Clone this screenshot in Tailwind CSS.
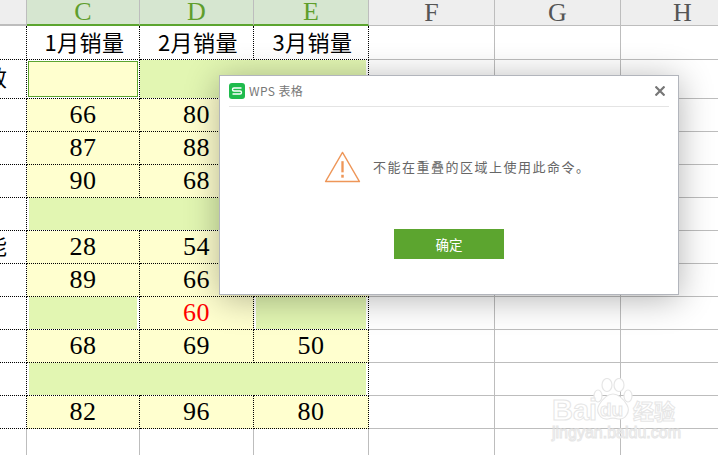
<!DOCTYPE html>
<html>

<head>
    <meta charset="UTF-8">
    <script src="https://cdn.jsdelivr.net/npm/@tailwindcss/browser@4"></script>
</head>

<body class="w-[718px] h-[455px] overflow-hidden bg-white relative font-['Liberation_Serif','Noto_Sans_CJK_SC',serif]">
    <div id="sheet" class="w-[745px] grid grid-cols-[27px_113px_114px_115px_126px_126px_124px] grid-rows-[26px_34px_39px_repeat(10,33px)_27px]"></div>

    <!-- watermark -->
    <div class="absolute left-[550px] top-[378px] w-[130px] h-[64px] text-white [-webkit-text-stroke:1px_#e6e6e6]">
        <svg class="absolute left-[43px] top-0" width="40" height="43" viewBox="0 0 40 43" fill="#fff" stroke="#e6e6e6" stroke-width="1.2">
            <ellipse cx="5" cy="18" rx="4" ry="6" />
            <ellipse cx="14" cy="7" rx="5" ry="6.5" />
            <ellipse cx="26" cy="7" rx="5" ry="6.5" />
            <ellipse cx="35" cy="18" rx="4" ry="6" />
            <path d="M20 16c6 0 11 6 14 11 4 7-2 15-9 14-3-1-7-1-10 0-7 1-13-7-9-14 3-5 8-11 14-11z" />
        </svg>
        <span class="absolute left-[2px] top-[20px] font-['Liberation_Sans'] font-bold text-[29px] leading-[24px]">Bai</span>
        <span class="absolute left-[50px] top-[22px] font-['Liberation_Sans'] font-bold text-[19px] leading-[20px]">du</span>
        <span class="absolute left-[83px] top-[20px] font-['Noto_Sans_CJK_SC'] font-bold text-[21px] leading-[24px] whitespace-nowrap">经验</span>
        <span class="absolute left-[2px] top-[46px] font-['Liberation_Sans'] text-[16px] leading-[18px] whitespace-nowrap">jingyan.baidu.com</span>
    </div>

    <!-- dialog -->
    <div class="absolute left-[219px] top-[75px] w-[460px] h-[220px] bg-white border border-[#b2b5bc] shadow-[0_4px_32px_rgba(0,0,0,0.3)] flex flex-col px-[9px] font-['Noto_Sans_CJK_SC',sans-serif]">
        <div class="h-[31px] flex items-center border-b border-[#e4e4e4] shrink-0">
            <svg width="16" height="16" viewBox="0 0 16 16">
                <rect width="16" height="16" rx="3" fill="#1fbb4d" />
                <path d="M12.5 5H5a1.5 1.5 0 0 0 0 3h6a1.5 1.5 0 0 1 0 3H3.5" fill="none" stroke="#fff" stroke-width="1.4" />
            </svg>
            <span class="ml-1 text-[12px] tracking-[0.4px] text-[#777]">WPS 表格</span>
            <svg class="ml-auto mr-[4px]" width="10" height="10" viewBox="0 0 10 10" stroke="#777" stroke-width="2.2">
                <path d="M0.5 0.5l9 9M9.5 0.5l-9 9" />
            </svg>
        </div>
        <div class="flex items-center ml-[95px] mt-[44px] h-[32px]">
            <svg width="37" height="32" viewBox="0 0 38 33" fill="none" stroke="#ee9658" stroke-width="1.4" stroke-linejoin="round">
                <path d="M19 1.5L36.5 31.5H1.5Z" />
                <path d="M19 10.5V22" stroke-width="2.4" />
                <path d="M19 24.5V27.5" stroke-width="2.6" />
            </svg>
            <span class="ml-[12px] text-[13px] tracking-[1.5px] text-[#666] whitespace-nowrap">不能在重叠的区域上使用此命令。</span>
        </div>
        <div class="ml-[165px] mt-[46px] w-[110px] h-[30px] bg-[#5ca52f] text-white text-[13.5px] flex items-center justify-center">确定</div>
    </div>

    <script>
        const sheet = document.getElementById("sheet");
        const GRID = "border-r border-b border-[#bdbdbd]";
        const DOT = "leading-[26px] border-r border-b border-dotted border-black";
        const YELLOW = "bg-[#ffffcf]";

        function cell(cls, text) {
            const d = document.createElement("div");
            d.className = "flex items-center justify-center overflow-hidden whitespace-nowrap " + cls;
            d.textContent = text || "";
            sheet.appendChild(d);
            return d;
        }

        // header row
        cell("bg-[#eeeeee] border-r border-b-2 border-[#bdbdbd]");
        ["C", "D", "E"].forEach(c => cell("bg-[#d6e6d0] border-r border-[#bdbdbd] border-b-2 border-b-[#5ca52f] text-[#5f9e2c] text-[26px] leading-[22px]", c));
        ["F", "G", "H"].forEach(c => cell("bg-[#eeeeee] border-r border-b border-[#bdbdbd] text-[#555555] text-[26px] leading-[22px]", c));

        // left column text, then C D E; g = green filler, s = selected cell
        const rows = [
            ["", "1月销量", "2月销量", "3月销量"],
            ["效", "s", "g", "g"],
            ["", "66", "80", ""],
            ["", "87", "88", ""],
            ["", "90", "68", ""],
            ["", "g", "g", "g"],
            ["能", "28", "54", ""],
            ["", "89", "66", ""],
            ["", "g", "r60", "ge"],
            ["", "68", "69", "50"],
            ["", "g", "g", "g"],
            ["", "82", "96", "80"],
            ["", null, null, null],
        ];

        rows.forEach((r, i) => {
            const left = cell("justify-start text-[22px] text-black " + (i === 12 ? "border-r border-[#bdbdbd]" : DOT));
            if (r[0]) {
                left.innerHTML = '<span class="-ml-[15px]">' + r[0] + "</span>";
            }
            r.slice(1).forEach((v, j) => {
                if (v === null) {
                    cell("border-r border-[#bdbdbd]");
                } else if (i === 0) {
                    cell(DOT + " pl-[3px] pb-[3px] text-black text-[22px] tracking-[0.5px] font-['Noto_Sans_CJK_SC']", v);
                } else if (v === "s") {
                    const c = cell(DOT + " p-[1px]");
                    c.innerHTML = '<div class="w-full h-full bg-[#ffffcf] border border-[#5ca52f]"></div>';
                } else if (v === "g" || v === "ge") {
                    // green filler rows run together, the white gap only shows at the run's ends
                    const end = j === 2 || v === "ge" || (i === 8 && j === 0);
                    const c = cell("border-b border-dotted border-black " + (end ? "border-r" : ""));
                    c.innerHTML = '<div class="w-full h-full bg-[#e2f6b2] my-[2px]"></div>';
                    c.firstChild.style.marginLeft = j === 0 || v === "ge" ? "2px" : "0";
                    c.firstChild.style.marginRight = end ? "2px" : "0";
                } else if (v[0] === "r") {
                    cell(DOT + " " + YELLOW + " text-[#ff0000] text-[26px] tracking-[0.5px]", v.slice(1));
                } else {
                    cell(DOT + " " + YELLOW + " text-black text-[26px] tracking-[0.5px]", v);
                }
            });
            ["", "", ""].forEach(() => cell(i === 12 ? "border-r border-[#bdbdbd]" : GRID));
        });
    </script>
</body>

</html>
